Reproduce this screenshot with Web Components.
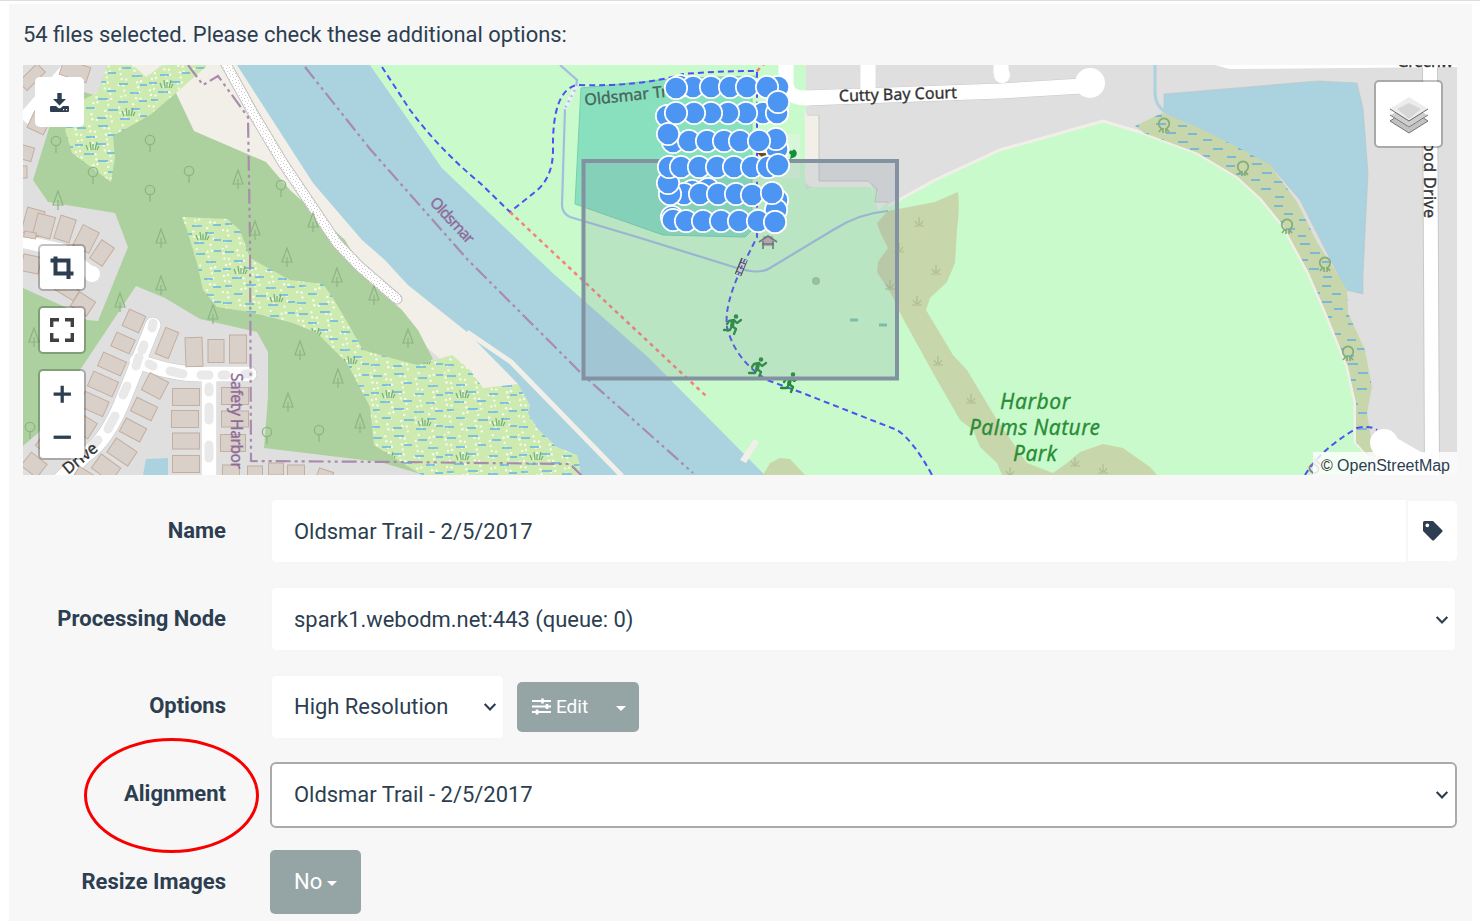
<!DOCTYPE html>
<html lang="en">
<head>
<meta charset="utf-8">
<title>New Task</title>
<style>
html,body{margin:0;height:100%;overflow:hidden;background:#fff;font-family:Roboto,sans-serif;color:#2c3e50}
</style>
</head>
<body>
<task-panel></task-panel>

<template id="t-map">
<style>
:host{display:block;position:relative;width:1434px;height:410px;overflow:hidden;background:#dfdfdf;flex:none}
svg.base{display:block;width:1434px;height:410px}
.ctl{position:absolute;background:#fff;display:flex;align-items:center;justify-content:center;box-sizing:border-box;border-radius:5px}
.b{border:2px solid rgba(0,0,0,.24);background-clip:padding-box;border-radius:5px}
.att{position:absolute;right:0;bottom:0;width:144px;height:23px;box-sizing:border-box;padding:0 7px 0 8px;background:rgba(255,255,255,.8);font:16px/27px "Liberation Sans",Arial,sans-serif;white-space:nowrap;display:flex;justify-content:space-between}
text{font-family:"Noto Sans",sans-serif}
.zoom{flex-direction:column}
.zoom svg{flex:1}
</style>
<svg class="base" viewBox="23 65 1434 410">
<defs>
<pattern id="wet" width="74" height="62" patternUnits="userSpaceOnUse">
<rect width="74" height="62" fill="#cdebb0"/>
<g fill="#f5fbe8" id="wd"></g>
<path stroke="#64b4ea" stroke-width="1.5" d="M3 4h9M24 2h10M48 6h9M66 3h7M12 13h9M34 11h8M58 14h10M1 21h8M22 20h10M45 22h9M66 23h7M10 30h10M33 29h9M56 31h9M3 38h7M24 37h10M44 40h10M65 39h8M12 46h9M34 48h10M57 47h9M1 55h9M23 56h9M46 57h10M66 54h7"/>
<path stroke="#72b07a" stroke-width="1.200" fill="none" d="M14 26l-2-5M17 26l-1-8M19 26v-6M21 26l2-8M23 26l2-4M50 54l-2-5M53 54l-1-8M55 54v-6M57 54l2-8M59 54l2-4"/>
</pattern>
<pattern id="swamp" width="48" height="40" patternUnits="userSpaceOnUse">
<rect width="48" height="40" fill="#c8d7ab"/>
<path stroke="#62aee6" stroke-width="1.600" d="M4 4h10M26 6h9M14 13h10M36 14h9M3 20h9M26 22h10M13 29h10M38 29h9M2 36h8M27 37h9"/>
</pattern>
<pattern id="gravel" width="6" height="6" patternUnits="userSpaceOnUse"><rect width="6" height="6" fill="#fff"/><path fill="#ccc" d="M1 1h1v1H1zM4 2h1v1H4zM2 4h1v1H2zM5 5h1v1H5z"/></pattern>
<g id="leaf" fill="none" stroke="#8db583" stroke-width="1.3"><circle cy="-3" r="4.7"/><path d="M0 2V9"/></g>
<g id="pine" fill="none" stroke="#8db583" stroke-width="1.2"><path d="M0 -9L-5 5H5ZM0 0V10"/></g>
<g id="tuft" fill="none" stroke="#adbb90" stroke-width="1.2"><path d="M-5 4H5M0 3V-5M-1 3L-4 -1M1 3L4 -1"/></g>
<g id="mang" fill="none" stroke="#86ad78" stroke-width="1.7"><path d="M-3 4A5.3 5.3 0 1 1 3 4M-2 4l-3 4M2 4l3 4M-1 4v5M2 4v5"/></g>
<g id="run" fill="none" stroke="#238b38" stroke-linecap="round" stroke-linejoin="round"><circle cx="3" cy="-8.500" r="1.500" fill="#238b38" stroke-width="1.500"/><path stroke-width="4" d="M0 -4L-1 1"/><path d="M-1 1L3 4L1 9M-1 1L-3 5H-9M1 -5L-4 -4L-6 -1M1 -5L4 -2L8 -5" stroke-width="2.300"/></g>
</defs>
<path fill="#f2efe9" d="M107 65H240L315 183L385 260L408 285L468 332L520 384L480 392L250 200Z"/>
<path fill="#add19e" d="M176 93L194 131L266 162L290 190L345 240L370 283L402 310L418 330L433 359L417 368L430 475H23V120L84 92L110 100Z"/>
<path fill="#dfdfdf" d="M23 65H107L98 92L84 92L50 125L33 180L48 202L115 213L128 247L98 321L87 320L65 307L23 288ZM136 286L165 298L200 319L257 332L268 352V397L264 448L380 462L424 475H23V446L39 432L80 370Z"/>
<path fill="url(#wet)" d="M107 65H133L146 77L162 65H208L176 93L150 115L113 136L115 157L111 182L72 153L65 130L83 100L98 92ZM182 217L227 219L240 230L250 258L290 280L323 284L333 298L350 327L363 350L380 355L417 365L452 355L470 370L483 388L518 384L530 405L528 413L537 428L557 447L577 455L580 465L579 475H422L377 447L374 445L370 407L347 363L317 333L293 323L250 312L217 307L203 290L197 263L187 230Z"/>
<path fill="#aad3df" d="M237 65H370L442 168L555 275L648 357L765 475H579L580 465L577 455L557 447L537 428L528 413L530 405L518 384L467 332L408 285L385 260L362 240L313 183Z"/>
<path fill="none" stroke="#f2efe9" stroke-width="5" d="M467 332L511 362L622 476"/>
<path fill="#c8facc" d="M370 65H806V190Q808 184 873 186L888 206L935 180L1000 150L1103 121L1143 133L1197 153L1237 177L1260 198L1282 225L1308 273L1327 317L1347 367L1355 403V442L1367 455L1372 475H765L648 357L555 275L442 168Z"/>
<path fill="none" stroke="#f2efe9" stroke-width="3" d="M888 206L935 180L1000 150L1103 121L1143 133L1197 153L1237 177L1260 198L1282 225L1308 273L1327 317L1347 367L1355 403V442L1367 455"/>
<path fill="#f2efe9" d="M805 111H819V181H871L875 202H888L878 211L871 187H812Q805 186 805 178Z"/>
<path fill="#dfdfdf" d="M806 65H903V196L890 202L877 201L878 189L868 180H820V114H806Z"/>
<path fill="none" stroke="#c8c5c7" d="M807 115H819V181H868L877 189L875 202H888"/>
<path fill="#aad3df" stroke="#bbc5c5" stroke-width=".6" d="M1164 94L1318 81L1357 83L1363 108L1368 173L1363 275V294L1346 290L1300 200L1270 165L1164 113Z"/>
<path fill="url(#swamp)" d="M1135 126L1162 113L1197 127L1243 150L1270 165L1297 202L1317 242L1338 275L1347 290L1348 313L1365 350L1372 387L1367 413L1374 456L1367 455L1356 442V403L1348 367L1328 317L1309 273L1283 225L1261 198L1238 177L1198 153L1144 133Z"/>
<path fill="none" stroke="#aad3df" stroke-width="3" d="M1155 65V93Q1155 106 1167 113"/>
<path fill="#c8d7ab" d="M888 211L935 202L958 192Q960 210 957 230L955 263L947 282L930 298L926 310L953 355L967 370L997 420L1013 443L1027 463L1053 473L1067 463L1080 452L1103 444L1123 448L1150 467L1157 475H1002L997 463L980 447L973 430L960 420L933 373L900 313L893 297L877 272L878 262L888 248L880 232L877 223ZM763 475L770 463L780 458L790 459L805 475Z"/>
<path fill="#88e0be" stroke="#79cfac" d="M581 88L680 78L757 76L752 82V230L745 237L663 235L575 204Z"/>
<path fill="#f2efe9" d="M740 460L754 439L759 442L746 463Z"/>
<g fill="none" stroke="#a3bddf" stroke-width="2.2"><path d="M560 65L577 80L576 88L565 108L562 205Q562 213 570 217L637 237L737 268Q760 275 770 268L833 230Q860 213 888 211"/></g>
<path d="M576 86L565 109" stroke="#eef" stroke-width="4" stroke-dasharray="4 2"/>
<rect x="757" y="134" width="43" height="44" fill="#def6df" opacity=".65"/>
<g stroke="#c9c9c9" fill="none" stroke-linejoin="round">
<g id="roadcase"></g>
</g>
<g fill="none" stroke="#fff" stroke-linejoin="round">
<path stroke-width="15" d="M786 60V82Q786 98 806 98L1000 91L1082 86M868 60V92M1001 60V74"/>
<path stroke-width="14" d="M1430 60L1432 475"/>
<path stroke-width="13" d="M23 120L75 60M20 241L62 250L92 274"/>
<path stroke-width="15" stroke-linecap="round" d="M153 325L125 395Q108 440 85 455L55 485M137 361Q172 374 200 374H249M209 380V485"/>
</g>
<g fill="#fff"><circle cx="1090" cy="83" r="15"/><circle cx="1002" cy="75" r="8"/><circle cx="92" cy="274" r="8"/><circle cx="1384" cy="443" r="14"/><path d="M1215 65L1230 69L1457 67V65ZM1384 456L1395 437L1426 455V475H1374Z"/></g>
<g fill="none" stroke="#e9e9e9" stroke-width="9" stroke-linecap="round"><path d="M153 323L152 328M144 345L142 350M139 357L136 366M127 386L123 395M115 416L108 429M98 440L92 446M149 364L153 366M170 371L183 374M201 375H209M222 375H226M245 374H249M209 387V392M209 407V420M209 445V458M70 70V66M50 94L58 84"/></g>
<g id="houses" fill="#d9d0c9" stroke="#c4ae9f"></g>
<path fill="#aad3df" d="M146 459L168 458V475H143Z"/>
<g fill="none" stroke-linecap="round"><path stroke="#c4c0bf" stroke-width="11" d="M222 57L253 113L283 163L337 243L360 267L397 299"/><path stroke="url(#gravel)" stroke-width="9" d="M222 57L253 113L283 163L337 243L360 267L397 299"/></g>
<g fill="none" stroke="#a88bad" stroke-width="2.2" stroke-dasharray="15 4 3 4 3 4"><path d="M188 65L203 85L218 76L248 117L250 240L251 461L400 462L570 464L582 476M305 67L370 149L468 260L583 375L693 473"/></g>
<g id="sym"></g>
<g fill="none" stroke="#4f4ff5" stroke-width="2" stroke-dasharray="6 4"><path d="M382 67L410 110Q440 150 480 183L510 212L535 192Q553 178 553 150Q552 90 577 85Q640 87 683 74Q720 71 757 71V237L742 267Q724 305 727 327Q735 360 767 380L800 392L897 430Q913 440 932 475M1305 475Q1320 450 1357 428Q1370 425 1377 430"/></g>
<path fill="none" stroke="#fb7f7b" stroke-width="2.5" stroke-dasharray="4 4" d="M510 212L706 396M757 71L765 63"/>
<path stroke="#444" stroke-width="7" d="M744.500 259L738 275"/><path stroke="#ddd" stroke-width="4.500" stroke-dasharray="4 1" d="M745 259L738 275"/><path stroke="#4f4ff5" stroke-width="1.500" stroke-dasharray="4 3" d="M745 259L738 275"/>
<g fill="none" stroke="#6c7271" stroke-width="1.6"><path fill="#bcaeb1" d="M763 236h10v10h-10z" stroke="none"/><path d="M759 242L768 236L777 242M763 241V249M773 241V249M762 244h12"/></g>
<circle cx="816" cy="281" r="4" fill="#9fcb9d"/><path stroke="#78c8ad" stroke-width="3" d="M850 320h8M879 325h8"/>
<use href="#run" x="733" y="325"/><use href="#run" x="758" y="368"/><use href="#run" x="790" y="383"/>
<path fill="#159039" d="M789 153q1-4 3-2l-1 4zM791 154q2-7 5-3q2 3-1 6l-5 2z"/><path d="M757 153h12l-6 5z" fill="#7a4812"/>
<g fill="#333" stroke="#333" stroke-width=".35" font-size="16">
<text transform="translate(585 105.500) rotate(-6)" font-size="16" fill="#49645a" stroke="#49645a">Oldsmar Trail</text>
<text transform="translate(839 101.500) rotate(-1.7)" textLength="118">Cutty Bay Court</text>
<text transform="translate(1424 142) rotate(90)" textLength="76">ood Drive</text>
<text x="1397" y="66.500" textLength="56">Greenw</text>
<text transform="translate(68 475) rotate(-39)" font-size="16">Drive</text>
<g fill="#8f6b98" stroke="#8f6b98" font-size="15.5"><text transform="translate(231 373) rotate(90)" textLength="96">Safety Harbor</text><text transform="translate(429 203) rotate(47)" textLength="57">Oldsmar</text><text transform="translate(1314 476) rotate(-48)" font-size="14">Ol</text></g>
<g font-size="21" font-style="italic" text-anchor="middle" fill="#2b8c38" stroke="#2b8c38" stroke-width=".3"><text x="1035" y="409" textLength="70">Harbor</text><text x="1034.500" y="435" textLength="131">Palms Nature</text><text x="1035" y="461" textLength="44">Park</text></g>
</g>
<rect x="583.5" y="161" width="313.500" height="217.500" fill="#7e8fa1" fill-opacity=".2" stroke="#8292a0" stroke-width="4"/>
<g id="dots" fill="#4c95f2" stroke="#fff" stroke-width="1.700"></g>
</svg>
<div class="ctl" style="left:12px;top:12px;width:49px;height:50px"><svg width="19" height="19" viewBox="0 0 19 19" fill="#2c3e50"><path d="M7.300 0h4.400v6H16L9.500 12.500 3 6h4.300zM1 13h5l2 1.700q1.500 1 3 0L13 13h5q1 0 1 1v4q0 1-1 1H1q-1 0-1-1v-4q0-1 1-1z"/><path fill="#fff" d="M13 16h1.200v1.200H13zM16 16h1.200v1.200H16z"/></svg></div>
<div class="ctl b" style="left:15px;top:179px;width:48px;height:47px"><svg width="24" height="24" viewBox="0 0 24 24" fill="none" stroke="#2c3e50" stroke-width="4"><path d="M5.500 .5V17.500H23.500M.5 4.500H18.500V23"/></svg></div>
<div class="ctl b" style="left:15px;top:241px;width:48px;height:48px"><svg width="24" height="24" viewBox="0 0 24 24" fill="none" stroke="#404040" stroke-width="3.400"><path d="M1.700 9V1.700H9M15 1.700H22.300V9M22.300 15V22.300H15M9 22.300H1.700V15"/></svg></div>
<div class="ctl b zoom" style="left:15px;top:304px;width:48px;height:91px"><svg width="18" viewBox="0 0 18 44"><path stroke="#2c3e50" stroke-width="3.300" d="M.5 23.500H18M9.200 15V32"/></svg><svg width="18" viewBox="0 0 18 44"><path stroke="#2c3e50" stroke-width="3.300" d="M.5 22.500H18"/></svg></div>
<div class="ctl b" style="right:14px;top:15px;width:69px;height:68px;padding-top:3px"><svg width="40" height="38" viewBox="0 0 40 38"><path fill="#c2c2c2" stroke="#747474" d="M1 24L20 12L39 24L20 36Z"/><path fill="#cecece" stroke="#fff" d="M1 18L20 7L39 18L20 30Z"/><path stroke="#6e6e6e" fill="none" d="M1 18L20 30L39 18"/><path fill="#ececec" d="M1 12L20 0L39 12L20 24Z"/><path fill="#d6d6d6" d="M8 12L20 6L32 12L20 22Z"/><path stroke="#666" fill="none" d="M1 12L20 24L39 12"/></svg></div>
<div class="att"><span style="color:#333">©</span><span>OpenStreetMap</span></div>
</template>

<script>
class SurveyMap extends HTMLElement{
  constructor(){
    super();
    const r=this.attachShadow({mode:'open'});
    r.append(document.getElementById('t-map').content.cloneNode(true));
    const set=(id,h)=>r.getElementById(id).innerHTML=h;
    let w='';
    for(let i=0;i<85;i++)w+=`<circle cx="${(i*29.3)%73+.5}" cy="${(i*17.9+(i%7)*3)%61+.5}" r="1.2"/>`;
    set('wd',w);
    const dots=[[680,86],[693,87],[711,87],[730,87],[747,87],[778,87],[767,87],[676,88],[667,116],[777,113],[763,113],[746,113],[728,113],[711,113],[694,113],[676,113],[777,113],[778,102],[777,149],[776,139],[673,142],[689,141],[707,141],[724,141],[740,141],[759,141],[668,134],[692,191],[708,189],[684,194],[670,194],[668,183],[669,167],[681,167],[699,167],[717,167],[734,167],[752,167],[768,167],[778,165],[700,194],[718,194],[736,194],[752,195],[777,200],[776,210],[775,222],[772,193],[672,217],[673,220],[686,221],[703,221],[721,221],[739,221],[758,221],[775,222]];
    set('dots',dots.map(([x,y])=>`<circle cx="${x}" cy="${y}" r="11.2"/>`).join(''));
    const H=[[75,71,28,16,18],[39,123,18,18,25],[26,153,14,14,15],[24,172,6,12,0],[32,77,26,12,-45],[33,222,18,26,15],[44,226,18,22,15],[65,229,16,24,18],[86,239,18,23,27],[30,235,12,6,10],[102,253,15,22,34],[31,264,18,17,12],[67,290,22,12,32],[83,304,19,17,33],[134,321,18,18,24],[123,343,20,15,24],[112,364,25,15,24],[103,384,27,16,24],[94,404,26,16,24],[84,426,20,18,32],[167,343,14,28,22],[194,352,17,29,-2],[216,351,16,23,0],[238,349,17,28,0],[155,386,21,19,28],[144,409,23,15,26],[133,430,23,15,28],[122,452,25,17,34],[106,468,24,17,36],[34,465,20,17,38],[48,446,21,14,36],[84,478,20,15,32],[186,397,27,17,0],[185,419,27,17,0],[186,441,27,16,0],[186,464,27,17,0],[235,396,27,17,0],[235,419,27,16,0],[233,443,25,17,0],[231,473,17,16,0],[255,473,15,14,0],[276,469,15,12,0],[296,472,17,14,0],[325,475,15,10,18]];
    set('houses',H.map(([x,y,w,h,a])=>`<rect x="${-w/2}" y="${-h/2}" width="${w}" height="${h}" transform="translate(${x} ${y}) rotate(${a})"/>`).join(''));
    const S={leaf:[[56,144],[150,143],[93,175],[189,174],[150,193],[281,188],[30,430],[319,433],[267,435]],pine:[[238,179],[161,238],[255,230],[313,222],[58,200],[287,257],[337,277],[374,295],[408,338],[161,285],[120,302],[213,314],[34,337],[300,350],[338,378],[288,402],[360,423]],tuft:[[919,222],[936,270],[899,248],[890,285],[917,301],[938,361],[971,399],[1010,472],[1075,462],[1103,469]],mang:[[1164,124],[1243,167],[1287,225],[1325,263],[1348,352]]};
    set('sym',Object.entries(S).map(([k,v])=>v.map(([x,y])=>`<use href="#${k}" x="${x}" y="${y}"/>`).join('')).join(''));
    set('roadcase','<path stroke-width="16" d="M809 98L1000 91L1082 86M1430 60L1432 475"/><path stroke-width="16" stroke-linecap="round" d="M153 325L125 395Q108 440 85 455L55 485M137 361Q172 374 200 374H249M209 380V485"/>');
  }
}
customElements.define('survey-map',SurveyMap);

const make=(name,html)=>customElements.define(name,class extends HTMLElement{
  constructor(){super();this.attachShadow({mode:'open'}).innerHTML=html;}
});

make('form-row',`<style>
:host{display:grid;grid-template-columns:203px 1187px;column-gap:44px;height:66px;margin-bottom:22px;align-items:center}
:host([snug]) .l{padding-bottom:2px}
.l{position:relative;text-align:right;font-weight:700;font-size:22px;line-height:30px;white-space:nowrap}
.c{display:flex;align-items:center;height:66px}
</style><div class="l"><slot name="label"></slot><slot name="mark"></slot></div><div class="c"><slot></slot></div>`);

make('text-field',`<style>
:host{display:flex;flex:1;height:66px;box-sizing:border-box;border:2px solid var(--edge,#f6f6f6);border-radius:6px;background:#fff;padding:0 8px 0 22px;align-items:center;justify-content:space-between;font-size:21.95px;white-space:nowrap}
:host([snug]){padding-bottom:2px}
</style><span><slot></slot></span><slot name="end"></slot>`);

make('chevron-icon',`<style>:host{display:block;width:12px;height:8px;margin-top:2px;margin-right:-1px}svg{display:block}</style>
<svg width="12" height="8" viewBox="0 0 12 8" fill="none" stroke="#2c3e50" stroke-width="2.2"><path d="M.7 .9L6 6.400L11.300 .9"/></svg>`);

make('caret-icon',`<style>:host{display:block;width:0;height:0;border:5px solid transparent;border-top-color:#fff;border-bottom:0}</style>`);

make('tag-addon',`<style>:host{display:flex;width:49px;height:60px;margin-left:1px;background:#fff;border-radius:0 5px 5px 0;align-items:center;justify-content:center}</style>
<svg width="20" height="20" viewBox="0 0 20 20"><path fill="#2c3e50" fill-rule="evenodd" d="M1.500 0H10L19.300 9.200Q20 10 19.300 10.800L11 19.200Q10 20 9.200 19.200L0 10V1.500Q0 0 1.500 0ZM4.300 2.500A1.900 1.900 0 1 0 4.310 2.500Z"/></svg>`);

make('gray-button',`<style>:host{display:flex;box-sizing:border-box;background:#95a5a6;color:#fff;border-radius:5px;align-items:center;white-space:nowrap}</style><slot></slot>`);

make('sliders-icon',`<style>:host{display:block;width:19px;height:17px}svg{display:block}</style>
<svg width="19" height="17" viewBox="0 0 19 17" fill="none" stroke="#fff" stroke-width="2"><path d="M0 3H19M0 8.500H19M0 14H19"/><path stroke-width="2.600" d="M10.500 .5V5.500M15 6V11M5 11.500V16.500"/></svg>`);

make('red-ring',`<style>:host{position:absolute;right:-33px;top:-41px;width:175px;height:115px;box-sizing:border-box;border:3px solid #f80000;border-radius:50%}</style>`);

make('task-panel',`<style>
:host{display:flex;flex-direction:column;height:921px;box-sizing:border-box;border-top:1px solid #ddd;padding:3px 8px 0 9px}
.p{background:#f7f7f7;flex:1;padding:0 14px;display:flex;flex-direction:column;overflow:hidden}
.h{height:61px;line-height:61px;font-size:21.95px;white-space:nowrap;flex:none}
.f{padding-top:23px}
</style>
<div class="p"><div class="h">54 files selected. Please check these additional options:</div>
<survey-map></survey-map>
<div class="f">
<form-row><span slot="label">Name</span><text-field style="border-radius:6px 0 0 6px;border-right-width:1px">Oldsmar Trail - 2/5/2017</text-field><tag-addon></tag-addon></form-row>
<form-row><span slot="label">Processing Node</span><text-field>spark1.webodm.net:443 (queue: 0)<chevron-icon slot="end"></chevron-icon></text-field></form-row>
<form-row snug><span slot="label">Options</span><text-field snug style="flex:0 0 235px">High Resolution<chevron-icon slot="end"></chevron-icon></text-field>
<gray-button style="width:122px;height:50px;margin-left:12px;padding:0 13px 2px 15px;font-size:19px"><sliders-icon></sliders-icon><span style="margin-left:5px;flex:1">Edit</span><caret-icon style="margin-top:5px"></caret-icon></gray-button></form-row>
<form-row snug><span slot="label">Alignment</span><red-ring slot="mark"></red-ring><text-field snug style="--edge:#aaa">Oldsmar Trail - 2/5/2017<chevron-icon slot="end"></chevron-icon></text-field></form-row>
<form-row snug><span slot="label">Resize Images</span><gray-button style="width:91px;height:64px;align-self:flex-start;padding:0 24px 2px;font-size:22px;justify-content:space-between">No<caret-icon style="margin-top:5px"></caret-icon></gray-button></form-row>
</div></div>`);
</script>
</body>
</html>
